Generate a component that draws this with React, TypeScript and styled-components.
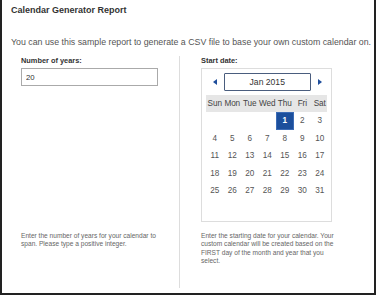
import styled, { createGlobalStyle } from "styled-components";

const GlobalStyle = createGlobalStyle`
  html, body {
    margin: 0;
    padding: 0;
    background: #fff;
  }
  body {
    font-family: "Liberation Sans", Arial, sans-serif;
  }
`;

const Frame = styled.div`
  box-sizing: border-box;
  width: 376px;
  height: 295px;
  border-left: 2px solid #222;
  border-right: 2px solid #222;
  border-bottom: 2px solid #222;
  background: #fff;
  display: flex;
  flex-direction: column;
`;

const Title = styled.h1`
  margin: 0;
  padding: 5px 9px 0;
  font-size: 9px;
  line-height: 11px;
  font-weight: bold;
  color: #333;
`;

const Intro = styled.p`
  margin: 0;
  padding: 20px 9px 0;
  font-size: 8.8px;
  line-height: 12px;
  color: #555;
  white-space: nowrap;
`;

const Columns = styled.div`
  display: grid;
  grid-template-columns: 178px 1fr;
  margin-top: 8px;
  height: 232px;
`;

const Column = styled.div<{ divider?: boolean }>`
  display: grid;
  grid-template-rows: 176px auto;
  padding-left: ${(p) => (p.divider ? "19px" : "21px")};
  border-right: ${(p) => (p.divider ? "1px solid #ddd" : "none")};
`;

const Field = styled.div`
  display: flex;
  flex-direction: column;
`;

const Label = styled.label`
  font-size: 7.4px;
  line-height: 9px;
  font-weight: bold;
  color: #333;
  margin-bottom: 3px;
`;

const YearsInput = styled.input`
  box-sizing: border-box;
  width: 137px;
  height: 18px;
  margin: 0;
  padding: 0 4px;
  border: 1px solid #aaa;
  font-family: inherit;
  font-size: 7.8px;
  color: #333;
  outline: none;
`;

const Help = styled.p`
  margin: 0;
  font-size: 6.6px;
  line-height: 8.3px;
  color: #666;
  width: 138px;
`;

const Calendar = styled.div`
  box-sizing: border-box;
  width: 131px;
  height: 154px;
  border: 1px solid #ddd;
  padding: 4px;
`;

const Grid = styled.div`
  display: grid;
  grid-template-columns: repeat(7, 17.5px);
`;

const Nav = styled(Grid)`
  height: 18px;
  align-items: center;
  margin-bottom: 4px;
`;

const Arrow = styled.span`
  display: flex;
  justify-content: center;
  align-items: center;
  color: #1f4e9c;
`;

const MonthButton = styled.button`
  grid-column: span 5;
  box-sizing: border-box;
  height: 18px;
  margin: 0;
  padding: 0;
  border: 1px solid #4a5d7e;
  border-radius: 1px;
  background: #fff;
  font-family: inherit;
  font-size: 8.6px;
  color: #333;
`;

const DayNames = styled(Grid)`
  background: #e6e6e6;
  height: 17px;
  align-items: center;
`;

const DayName = styled.span`
  text-align: center;
  font-size: 8.2px;
  letter-spacing: -0.1px;
  color: #444;
  white-space: nowrap;
`;

const Day = styled.span<{ selected?: boolean }>`
  height: 17.5px;
  display: flex;
  justify-content: center;
  align-items: center;
  font-size: 8.2px;
  font-weight: ${(p) => (p.selected ? "bold" : "normal")};
  color: ${(p) => (p.selected ? "#fff" : "#555")};
  background: ${(p) => (p.selected ? "#1c4f9c" : "transparent")};
  box-shadow: ${(p) => (p.selected ? "inset 0 0 0 1px #3b6bb5" : "none")};
`;

const Triangle = ({ dir }: { dir: "left" | "right" }) => (
  <svg width="4" height="6" viewBox="0 0 4 6">
    {dir === "left" ? (
      <path d="M4 0 L0 3 L4 6 Z" fill="currentColor" />
    ) : (
      <path d="M0 0 L4 3 L0 6 Z" fill="currentColor" />
    )}
  </svg>
);

const dayNames = ["Sun", "Mon", "Tue", "Wed", "Thu", "Fri", "Sat"];

function App() {
  // Jan 2015 starts on a Thursday
  const cells: (number | null)[] = [];
  for (let i = 0; i < 4; i++) cells.push(null);
  for (let d = 1; d <= 31; d++) cells.push(d);

  return (
    <>
      <GlobalStyle />
      <Frame>
        <Title>Calendar Generator Report</Title>
        <Intro>
          You can use this sample report to generate a CSV file to base your own custom calendar on.
        </Intro>
        <Columns>
          <Column divider>
            <Field>
              <Label>Number of years:</Label>
              <YearsInput defaultValue="20" />
            </Field>
            <Help>
              Enter the number of years for your calendar to span. Please type a positive integer.
            </Help>
          </Column>
          <Column>
            <Field>
              <Label>Start date:</Label>
              <Calendar>
                <Nav>
                  <Arrow>
                    <Triangle dir="left" />
                  </Arrow>
                  <MonthButton>Jan 2015</MonthButton>
                  <Arrow>
                    <Triangle dir="right" />
                  </Arrow>
                </Nav>
                <DayNames>
                  {dayNames.map((n) => (
                    <DayName key={n}>{n}</DayName>
                  ))}
                </DayNames>
                <Grid>
                  {cells.map((d, i) => (
                    <Day key={i} selected={d === 1}>
                      {d ?? ""}
                    </Day>
                  ))}
                </Grid>
              </Calendar>
            </Field>
            <Help>
              Enter the starting date for your calendar. Your custom calendar will be created based on
              the FIRST day of the month and year that you select.
            </Help>
          </Column>
        </Columns>
      </Frame>
    </>
  );
}

export default App;
